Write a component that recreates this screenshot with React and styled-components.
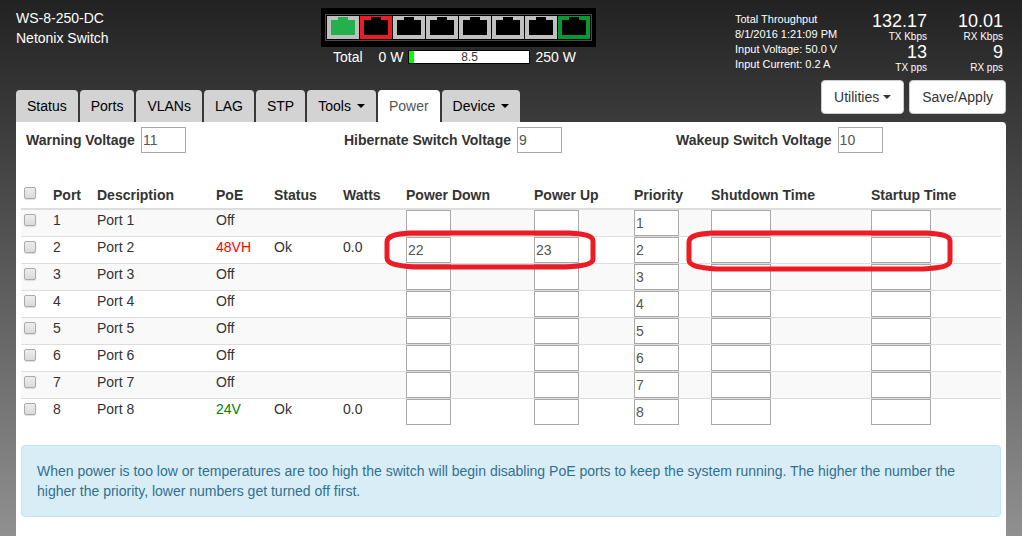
import React, { useState } from "react";
import styled, { createGlobalStyle } from "styled-components";

const GlobalStyle = createGlobalStyle`
  *, *::before, *::after { box-sizing: border-box; }
  html { background: #222; }
  body {
    margin: 0;
    min-height: 100vh;
    background: linear-gradient(#222222, #909090);
    color: #333;
    font: 14px/20px "Liberation Sans", Arial, sans-serif;
  }
  button, input { font: inherit; }
`;

const Page = styled.div`
  display: flex;
  flex-direction: column;
  min-height: 100vh;
  padding: 0 16px;
`;

const Header = styled.header`
  display: grid;
  grid-template-columns: 305fr 414fr 271fr;
  height: 80px;
  padding-top: 8px;
  color: #fff;
`;

const Title = styled.h1`
  margin: 0;
  font-size: 14px;
  font-weight: normal;
  line-height: 20px;
`;

const SwitchFigure = styled.div`
  display: flex;
  flex-direction: column;
  align-items: flex-start;
`;

const PortStrip = styled.div`
  padding: 6px 4px;
  background: #000;
`;

const PortFrame = styled.div`
  display: flex;
  gap: 1px;
  padding: 1px;
  border: 1px solid #4a4a4a;
`;

const PowerMeter = styled.div`
  display: flex;
  align-items: center;
  gap: 5px;
  height: 20px;
  padding-left: 12px;
`;

const MeterName = styled.span`
  margin-right: 11px;
`;

const MeterBar = styled.div`
  position: relative;
  width: 122px;
  height: 14px;
  border: 1px solid #000;
  background: #fff;
`;

const MeterFill = styled.div`
  height: 100%;
  background: #0f0;
`;

const MeterValue = styled.span`
  position: absolute;
  inset: 0;
  color: #333;
  font-size: 12px;
  line-height: 12px;
  text-align: center;
`;

const Stats = styled.div`
  display: grid;
  grid-template-columns: 1fr auto 76px;
  padding: 4px 3px 0 0;
`;

const Readings = styled.div`
  font-size: 11px;
  line-height: 15px;
  white-space: nowrap;
`;

const Rates = styled.div`
  display: flex;
  flex-direction: column;
  text-align: right;
`;

const RateValue = styled.span`
  font-size: 18px;
  line-height: 18px;
`;

const RateUnit = styled.span`
  font-size: 10px;
  line-height: 13px;
`;

const Toolbar = styled.div`
  display: flex;
  justify-content: space-between;
  align-items: flex-start;
  height: 42px;
`;

const Tabs = styled.nav`
  display: flex;
  gap: 2px;
  padding-top: 10px;
`;

const Tab = styled.a`
  display: flex;
  align-items: center;
  gap: 6px;
  padding: 6px 11px;
  border-radius: 4px 4px 0 0;
  background: ${(p) => (p.$active ? "#fff" : "#d3d3d3")};
  color: ${(p) => (p.$active ? "#555" : "#000")};
  text-decoration: none;
`;

const Caret = styled.span`
  border-top: 4px solid currentColor;
  border-right: 4px solid transparent;
  border-left: 4px solid transparent;
`;

const Actions = styled.div`
  display: flex;
  gap: 5px;
`;

const Button = styled.button`
  display: flex;
  align-items: center;
  gap: 4px;
  padding: 6px 12px;
  border: 1px solid #ccc;
  border-radius: 4px;
  background: #fff;
  color: #333;
`;

const Panel = styled.main`
  flex: 1;
  padding: 5px;
  border-radius: 0 4px 0 0;
  background: #fff;
`;

const Voltages = styled.div`
  display: grid;
  grid-template-columns: 318fr 332fr 325fr;
  padding-left: 5px;
`;

const Field = styled.label`
  display: flex;
  align-items: center;
  gap: 6px;
  font-weight: bold;
  white-space: nowrap;
`;

const TextInput = styled.input`
  display: block;
  width: ${(p) => (p.$wide ? 60 : 45)}px;
  height: 26px;
  padding: 1px;
  border: 1px solid #a9a9a9;
  background: #fff;
  color: #555;
  font-weight: normal;
`;

const Checkbox = styled.input.attrs({ type: "checkbox" })`
  appearance: none;
  display: block;
  width: 12px;
  height: 12px;
  margin: 4px 0 0 3px;
  border: 1px solid #aaa;
  border-radius: 2px;
  background: linear-gradient(#eee, #dadada);
  box-shadow: 0 1px 1px #ddd;
  &:checked { background: #777; }
`;

const PortTable = styled.table`
  width: 100%;
  margin: 30px 0 20px;
  border-spacing: 0;
  table-layout: fixed;
`;

const HeadCell = styled.th`
  width: ${(p) => p.$width}px;
  height: 27px;
  padding: 0 0 3px;
  border-bottom: 2px solid #ddd;
  text-align: left;
  vertical-align: ${(p) => (p.$top ? "top" : "bottom")};
  white-space: nowrap;
`;

const Row = styled.tr`
  &:nth-child(odd) { background: #f9f9f9; }
  & + & > td { border-top: 1px solid #ddd; }
`;

const Cell = styled.td`
  position: relative;
  padding: 0;
  vertical-align: top;
  color: ${(p) => p.$color || "inherit"};
`;

const Highlight = styled.svg`
  position: absolute;
  z-index: 1;
  top: -7px;
  left: ${(p) => p.$left}px;
  pointer-events: none;
`;

const Notice = styled.p`
  margin: 0;
  padding: 15px;
  border: 1px solid #bce8f1;
  border-radius: 4px;
  background: #d9edf7;
  color: #31708f;
`;

const jacks = [
  ["#c0c0c0", "#22b14c"],
  ["#ed1c24", "#000"],
  ["#c0c0c0", "#000"],
  ["#c0c0c0", "#000"],
  ["#c0c0c0", "#000"],
  ["#c0c0c0", "#000"],
  ["#c0c0c0", "#000"],
  ["#009933", "#000"],
];

const tabs = [
  ["Status"], ["Ports"], ["VLANs"], ["LAG"], ["STP"],
  ["Tools", true], ["Power"], ["Device", true],
];

const columns = [
  ["Port", 44], ["Description", 119], ["PoE", 58], ["Status", 69],
  ["Watts", 63], ["Power Down", 128], ["Power Up", 100], ["Priority", 77],
  ["Shutdown Time", 160], ["Startup Time", 130],
];

const ports = [
  { poe: "Off" },
  { poe: "48VH", color: "#f00", status: "Ok", watts: "0.0", down: "22", up: "23", marked: true },
  { poe: "Off" },
  { poe: "Off" },
  { poe: "Off" },
  { poe: "Off" },
  { poe: "Off" },
  { poe: "24V", color: "#008000", status: "Ok", watts: "0.0" },
];

function Jack({ shell, hole }) {
  return (
    <svg width="32" height="23" viewBox="0 0 32 23" shapeRendering="crispEdges" aria-hidden="true" display="block">
      <path fill={shell} d="M0 0h32v23H0z" />
      <path fill={hole} d="M4 4h7V1h10v3h7v15H4z" />
    </svg>
  );
}

function Ring({ left, width, height }) {
  const w = width - 3;
  const h = height - 3;
  return (
    <Highlight $left={left} width={width} height={height} aria-hidden="true">
      <path
        fill="none"
        stroke="#ed1c24"
        strokeWidth="5"
        d={`M26 3H${w - 23}C${w - 8} 4 ${w} 6 ${w} 11V${h - 8}C${w} ${h - 3} ${w - 10} ${h - 1} ${w - 27} ${h}H30C14 ${h - 1} 3 ${h - 3} 3 ${h - 9}V12C3 6 11 4 26 3Z`}
      />
    </Highlight>
  );
}

function VoltageField({ label, value }) {
  return (
    <Field>
      {label}
      <TextInput type="text" defaultValue={value} />
    </Field>
  );
}

function PortRow({ number, port }) {
  const name = `Port ${number}`;
  return (
    <Row>
      <Cell><Checkbox aria-label={`Select ${name}`} /></Cell>
      <Cell>{number}</Cell>
      <Cell>{name}</Cell>
      <Cell $color={port.color}>{port.poe}</Cell>
      <Cell>{port.status}</Cell>
      <Cell>{port.watts}</Cell>
      <Cell>
        <TextInput aria-label={`${name} power down`} defaultValue={port.down} />
        {port.marked && <Ring left={-22} width={212} height={40} />}
      </Cell>
      <Cell><TextInput aria-label={`${name} power up`} defaultValue={port.up} /></Cell>
      <Cell><TextInput aria-label={`${name} priority`} defaultValue={number} /></Cell>
      <Cell>
        <TextInput $wide aria-label={`${name} shutdown time`} />
        {port.marked && <Ring left={-25} width={267} height={42} />}
      </Cell>
      <Cell><TextInput $wide aria-label={`${name} startup time`} /></Cell>
    </Row>
  );
}

export default function App() {
  const [active, setActive] = useState("Power");
  return (
    <Page>
      <GlobalStyle />
      <Header>
        <Title>WS-8-250-DC<br />Netonix Switch</Title>
        <SwitchFigure>
          <PortStrip>
            <PortFrame>
              {jacks.map(([shell, hole], i) => <Jack key={i} shell={shell} hole={hole} />)}
            </PortFrame>
          </PortStrip>
          <PowerMeter>
            <MeterName>Total</MeterName>
            <span>0 W</span>
            <MeterBar>
              <MeterFill style={{ width: `${(8.5 / 250) * 100}%` }} />
              <MeterValue>8.5</MeterValue>
            </MeterBar>
            <span>250 W</span>
          </PowerMeter>
        </SwitchFigure>
        <Stats>
          <Readings>
            Total Throughput<br />8/1/2016 1:21:09 PM<br />Input Voltage: 50.0 V<br />Input Current: 0.2 A
          </Readings>
          <Rates>
            <RateValue>132.17</RateValue>
            <RateUnit>TX Kbps</RateUnit>
            <RateValue>13</RateValue>
            <RateUnit>TX pps</RateUnit>
          </Rates>
          <Rates>
            <RateValue>10.01</RateValue>
            <RateUnit>RX Kbps</RateUnit>
            <RateValue>9</RateValue>
            <RateUnit>RX pps</RateUnit>
          </Rates>
        </Stats>
      </Header>
      <Toolbar>
        <Tabs>
          {tabs.map(([label, menu]) => (
            <Tab key={label} href={`#${label}`} $active={label === active} onClick={() => setActive(label)}>
              {label}
              {menu && <Caret />}
            </Tab>
          ))}
        </Tabs>
        <Actions>
          <Button type="button">Utilities<Caret /></Button>
          <Button type="button">Save/Apply</Button>
        </Actions>
      </Toolbar>
      <Panel>
        <Voltages>
          <VoltageField label="Warning Voltage" value="11" />
          <VoltageField label="Hibernate Switch Voltage" value="9" />
          <VoltageField label="Wakeup Switch Voltage" value="10" />
        </Voltages>
        <PortTable>
          <thead>
            <tr>
              <HeadCell $width={32} $top><Checkbox aria-label="Select all ports" /></HeadCell>
              {columns.map(([label, width]) => <HeadCell key={label} $width={width}>{label}</HeadCell>)}
            </tr>
          </thead>
          <tbody>
            {ports.map((port, i) => <PortRow key={i} number={i + 1} port={port} />)}
          </tbody>
        </PortTable>
        <Notice>
          When power is too low or temperatures are too high the switch will begin disabling PoE ports to keep the
          system running. The higher the number the higher the priority, lower numbers get turned off first.
        </Notice>
      </Panel>
    </Page>
  );
}
